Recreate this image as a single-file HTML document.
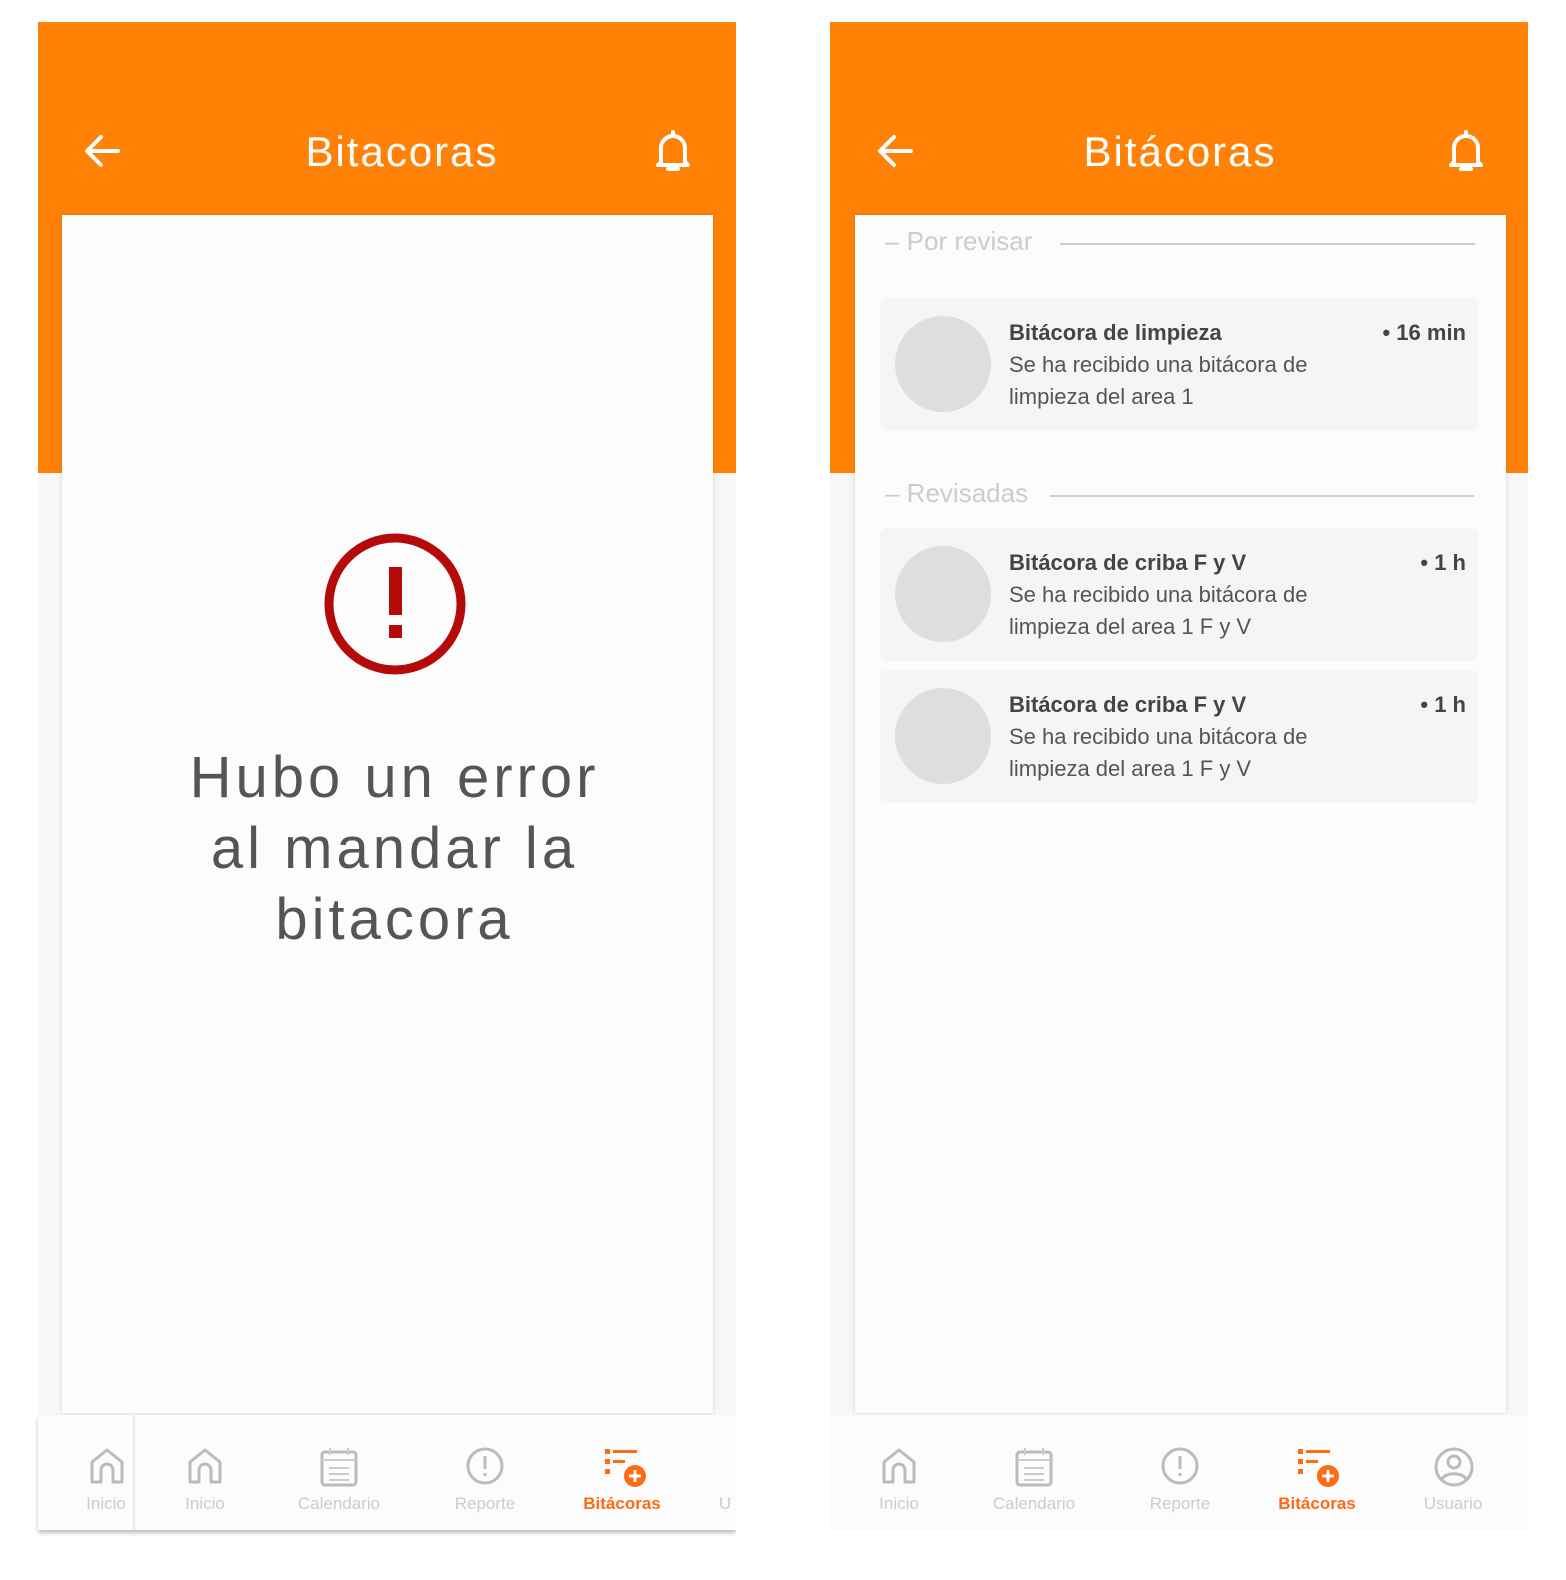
<!DOCTYPE html>
<html><head><meta charset="utf-8"><style>
*{margin:0;padding:0;box-sizing:border-box}
body{width:1566px;height:1580px;background:#fff;position:relative;overflow:hidden;font-family:"Liberation Sans",sans-serif}
.abs{position:absolute}
.hdr{background:#ff8206;height:451px;top:22px;width:698px}
.title{color:#fff;font-size:42px;letter-spacing:2px;top:128px;text-align:center}
.card{background:#fcfcfc;top:215px;height:1198px;box-shadow:0 0 4px rgba(0,0,0,.15)}
.nav{top:1415px;height:115px;width:698px;background:#fcfcfc;box-shadow:0 3px 4px rgba(0,0,0,.25)}
.lbl{font-size:17px;color:#ccc;text-align:center;width:140px;top:1494px}
.ico{top:1446px}
.item{background:#f5f5f5;left:880px;width:598px;border-radius:6px}
.av{width:96px;height:96px;border-radius:50%;background:#dedede;left:895px}
.it{font-size:22px;color:#555;left:1009px;line-height:32px}
.it b{color:#444}
.tm{font-size:22px;color:#444;font-weight:bold;right:100px}
.sec{font-size:26px;color:#ccc;left:885px}
.line{height:2px;background:#ccc}
</style></head><body>
<div class="abs hdr" style="left:38px"></div>
<div class="abs" style="left:38px;top:473px;width:698px;height:942px;background:#f7f7f7"></div>
<svg class="abs" style="left:82px;top:132px" width="40" height="38" viewBox="0 0 40 38"><path d="M36 19H6M19 5 5 19l14 14" stroke="#fff" stroke-width="4" fill="none" stroke-linecap="round" stroke-linejoin="round"/></svg>
<div class="abs title" style="left:38px;width:728px">Bitacoras</div>
<svg class="abs" style="left:653px;top:128px" width="40" height="46" viewBox="0 0 40 46"><path d="M8 34V20a12 12 0 0 1 24 0v14l3 3H5z" stroke="#fff" stroke-width="4" fill="none" stroke-linejoin="round"/><path d="M15 41h10M20 4v4" stroke="#fff" stroke-width="4" stroke-linecap="round"/></svg>
<div class="abs card" style="left:62px;width:651px"></div>
<svg class="abs" style="left:322px;top:532px" width="146" height="144" viewBox="0 0 146 144"><circle cx="73" cy="72" r="66" stroke="#b50a0a" stroke-width="9" fill="none"/><rect x="67" y="35" width="13" height="48" fill="#b50a0a"/><rect x="67" y="93" width="13" height="13" fill="#b50a0a"/></svg>
<div class="abs" style="left:62px;width:665px;top:742px;text-align:center;font-size:58px;line-height:71px;color:#555;letter-spacing:4px">Hubo un error<br>al mandar la<br>bitacora</div>
<div class="abs nav" style="left:38px"></div>
<div class="abs" style="left:133px;top:1415px;width:2px;height:115px;background:#e8e8e8"></div>
<svg class="abs ico" style="left:88px" width="38" height="40" viewBox="0 0 38 40"><path d="M4 36V16L19 4l15 12v20H25V24a6 6 0 0 0-12 0v12z" stroke="#bbb" stroke-width="3" fill="none" stroke-linejoin="round"/></svg>
<svg class="abs ico" style="left:186px" width="38" height="40" viewBox="0 0 38 40"><path d="M4 36V16L19 4l15 12v20H25V24a6 6 0 0 0-12 0v12z" stroke="#bbb" stroke-width="3" fill="none" stroke-linejoin="round"/></svg>
<svg class="abs ico" style="left:319px" width="40" height="42" viewBox="0 0 40 42"><rect x="3" y="6" width="34" height="33" rx="3" stroke="#bbb" stroke-width="3" fill="none"/><path d="M3 14h34M11 2v7M29 2v7M10 22h20M10 28h20M10 34h20" stroke="#ccc" stroke-width="2"/></svg>
<svg class="abs ico" style="left:465px" width="40" height="40" viewBox="0 0 40 40"><circle cx="20" cy="20" r="17" stroke="#bbb" stroke-width="3" fill="none"/><path d="M20 10v13M20 27v3" stroke="#bbb" stroke-width="3"/></svg>
<svg class="abs ico" style="left:603px" width="46" height="46" viewBox="0 0 46 46"><g fill="#ff6a13"><rect x="2" y="3" width="5" height="5"/><rect x="10" y="4" width="24" height="3"/><rect x="2" y="13" width="5" height="5"/><rect x="10" y="14" width="12" height="3"/><rect x="2" y="23" width="5" height="5"/><circle cx="32" cy="30" r="11"/></g><path d="M32 24v12M26 30h12" stroke="#fff" stroke-width="3"/></svg>
<div class="abs lbl" style="left:36px">Inicio</div>
<div class="abs lbl" style="left:135px">Inicio</div>
<div class="abs lbl" style="left:269px">Calendario</div>
<div class="abs lbl" style="left:415px">Reporte</div>
<div class="abs lbl" style="left:552px;color:#ff6a13;font-weight:bold">Bitácoras</div>
<div class="abs lbl" style="left:655px;width:140px;text-align:center">U</div>
<div class="abs" style="left:736px;top:1400px;width:40px;height:140px;background:#fff"></div>

<div class="abs hdr" style="left:830px"></div>
<div class="abs" style="left:830px;top:473px;width:698px;height:942px;background:#f7f7f7"></div>
<svg class="abs" style="left:875px;top:132px" width="40" height="38" viewBox="0 0 40 38"><path d="M36 19H6M19 5 5 19l14 14" stroke="#fff" stroke-width="4" fill="none" stroke-linecap="round" stroke-linejoin="round"/></svg>
<div class="abs title" style="left:830px;width:700px">Bitácoras</div>
<svg class="abs" style="left:1446px;top:128px" width="40" height="46" viewBox="0 0 40 46"><path d="M8 34V20a12 12 0 0 1 24 0v14l3 3H5z" stroke="#fff" stroke-width="4" fill="none" stroke-linejoin="round"/><path d="M15 41h10M20 4v4" stroke="#fff" stroke-width="4" stroke-linecap="round"/></svg>
<div class="abs card" style="left:855px;width:651px"></div>
<div class="abs sec" style="top:226px">– Por revisar</div>
<div class="abs line" style="left:1060px;top:243px;width:415px"></div>
<div class="abs sec" style="top:478px">– Revisadas</div>
<div class="abs line" style="left:1050px;top:495px;width:424px"></div>

<div class="abs item" style="top:298px;height:133px"></div>
<div class="abs av" style="top:316px"></div>
<div class="abs it" style="top:317px"><b>Bitácora de limpieza</b><br>Se ha recibido una bitácora de<br>limpieza del area 1</div>
<div class="abs tm" style="top:317px;line-height:32px">• 16 min</div>

<div class="abs item" style="top:528px;height:133px"></div>
<div class="abs av" style="top:546px"></div>
<div class="abs it" style="top:547px"><b>Bitácora de criba F y V</b><br>Se ha recibido una bitácora de<br>limpieza del area 1 F y V</div>
<div class="abs tm" style="top:547px;line-height:32px">• 1 h</div>

<div class="abs item" style="top:670px;height:133px"></div>
<div class="abs av" style="top:688px"></div>
<div class="abs it" style="top:689px"><b>Bitácora de criba F y V</b><br>Se ha recibido una bitácora de<br>limpieza del area 1 F y V</div>
<div class="abs tm" style="top:689px;line-height:32px">• 1 h</div>

<div class="abs nav" style="left:830px;box-shadow:none"></div>
<svg class="abs ico" style="left:880px" width="38" height="40" viewBox="0 0 38 40"><path d="M4 36V16L19 4l15 12v20H25V24a6 6 0 0 0-12 0v12z" stroke="#bbb" stroke-width="3" fill="none" stroke-linejoin="round"/></svg>
<svg class="abs ico" style="left:1014px" width="40" height="42" viewBox="0 0 40 42"><rect x="3" y="6" width="34" height="33" rx="3" stroke="#bbb" stroke-width="3" fill="none"/><path d="M3 14h34M11 2v7M29 2v7M10 22h20M10 28h20M10 34h20" stroke="#ccc" stroke-width="2"/></svg>
<svg class="abs ico" style="left:1160px" width="40" height="40" viewBox="0 0 40 40"><circle cx="20" cy="20" r="17" stroke="#bbb" stroke-width="3" fill="none"/><path d="M20 10v13M20 27v3" stroke="#bbb" stroke-width="3"/></svg>
<svg class="abs ico" style="left:1296px" width="46" height="46" viewBox="0 0 46 46"><g fill="#ff6a13"><rect x="2" y="3" width="5" height="5"/><rect x="10" y="4" width="24" height="3"/><rect x="2" y="13" width="5" height="5"/><rect x="10" y="14" width="12" height="3"/><rect x="2" y="23" width="5" height="5"/><circle cx="32" cy="30" r="11"/></g><path d="M32 24v12M26 30h12" stroke="#fff" stroke-width="3"/></svg>
<svg class="abs ico" style="left:1433px" width="42" height="42" viewBox="0 0 42 42"><circle cx="21" cy="21" r="18" stroke="#bbb" stroke-width="3" fill="none"/><circle cx="21" cy="16" r="6" stroke="#bbb" stroke-width="3" fill="none"/><path d="M9 33c4-7 20-7 24 0" stroke="#bbb" stroke-width="3" fill="none"/></svg>
<div class="abs lbl" style="left:829px">Inicio</div>
<div class="abs lbl" style="left:964px">Calendario</div>
<div class="abs lbl" style="left:1110px">Reporte</div>
<div class="abs lbl" style="left:1247px;color:#ff6a13;font-weight:bold">Bitácoras</div>
<div class="abs lbl" style="left:1383px">Usuario</div>
</body></html>
